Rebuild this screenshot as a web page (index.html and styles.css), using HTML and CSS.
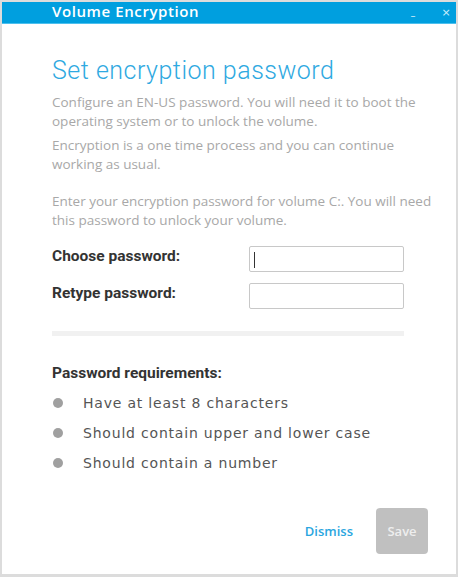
FILE: index.html
```html
<!DOCTYPE html>
<html lang="en">
<head>
  <meta charset="UTF-8">
  <title>Volume Encryption</title>
  <link rel="stylesheet" href="styles.css">
</head>
<body>
  <div class="window">
    <!-- Title bar -->
    <div class="titlebar">
      <span class="title">Volume Encryption</span>
      <span class="win-btn min">&#8211;</span>
      <span class="win-btn close">&#215;</span>
    </div>

    <div class="content">
      <h1>Set encryption password</h1>
      <p class="info">Configure an EN-US password. You will need it to boot the operating system or to unlock the volume.</p>
      <p class="info">Encryption is a one time process and you can continue working as usual.</p>
      <p class="info prompt">Enter your encryption password for volume C:. You will need this password to unlock your volume.</p>

      <div class="field">
        <label for="pw1">Choose password:</label>
        <input type="password" id="pw1" class="caret">
      </div>
      <div class="field">
        <label for="pw2">Retype password:</label>
        <input type="password" id="pw2">
      </div>

      <div class="strength"></div>

      <h2>Password requirements:</h2>
      <ul class="reqs">
        <li>Have at least 8 characters</li>
        <li>Should contain upper and lower case</li>
        <li>Should contain a number</li>
      </ul>

      <div class="actions">
        <a href="#" class="dismiss">Dismiss</a>
        <button class="save" disabled>Save</button>
      </div>
    </div>
  </div>
</body>
</html>
```

FILE: styles.css
```css
html, body { margin: 0; padding: 0; background: #fff; }
body { font-family: "Open Sans", sans-serif; }
/* Window frame */
.window { width: 458px; height: 577px; box-sizing: border-box; border: 2px solid #dcdcdc; border-bottom-width: 3px; display: flex; flex-direction: column; }
.titlebar { height: 21px; background-color: #009fdf; border-bottom: 1px solid #4cc0ee; display: flex; align-items: center; padding-left: 50px; color: #fff; }
.title { font-family: "Open Sans", sans-serif; font-weight: 600; font-size: 15px; flex: 1; letter-spacing: 0.6px; margin-top: -4px; }
.win-btn { color: #cfeefb; font-family: "DejaVu Sans", sans-serif; font-size: 11px; width: 32px; text-align: center; }
.win-btn.min { font-size: 10px; margin-top: 5px; margin-right: 7px; }
.win-btn.close { width: 20px; margin-right: 0; }

.content { flex: 1; padding: 0 52px 0 50px; display: flex; flex-direction: column; }
h1 { font-family: Roboto, sans-serif; font-weight: 300; font-size: 25px; letter-spacing: 0.5px; color: #2fa9e1; margin: 31px 0 6px; line-height: 32px; }
.info { font-size: 13.5px; color: #a8a8a8; line-height: 19px; margin: 0 -36px 5px 0; }
.info.prompt { margin-top: 13px; }

.field { display: flex; align-items: center; height: 30px; margin-top: 9px; }
.field + .field { margin-top: 7px; }
.field label { font-family: Roboto, sans-serif; font-weight: bold; font-size: 15.5px; color: #333; width: 198px; margin-top: -6px; }
.field input { width: 155px; height: 26px; box-sizing: border-box; border: 1px solid #c8c8c8; border-radius: 2px; padding: 0 4px; outline: none; }
.field input.caret { background: linear-gradient(#333, #333) no-repeat 4px 5px / 1px 16px; }

.strength { height: 5px; background: #f1f1f1; margin: 20px 0 0; width: 352px; }

h2 { font-family: Roboto, sans-serif; font-weight: bold; font-size: 15.5px; color: #333; margin: 28px 0 0; }
.reqs { list-style: none; padding: 0; margin: 6px 0 0; }
.reqs li { font-family: "DejaVu Sans", sans-serif; font-size: 14px; letter-spacing: 0.8px; color: #555; height: 30px; display: flex; align-items: center; }
.reqs li::before { content: ""; width: 10px; height: 10px; border-radius: 50%; background: #a0a0a0; margin: 0 20px 0 1px; }

.actions { margin-top: auto; margin-bottom: 20px; display: flex; justify-content: flex-end; align-items: center; gap: 23px; margin-right: -24px; }
.dismiss { color: #2aa6e0; text-decoration: none; font-size: 13px; font-weight: 600; }
.save { width: 52px; height: 46px; border: none; border-radius: 4px; background: #c0c0c0; color: #eee; font-family: "Open Sans", sans-serif; font-size: 13px; font-weight: 600; }
```
